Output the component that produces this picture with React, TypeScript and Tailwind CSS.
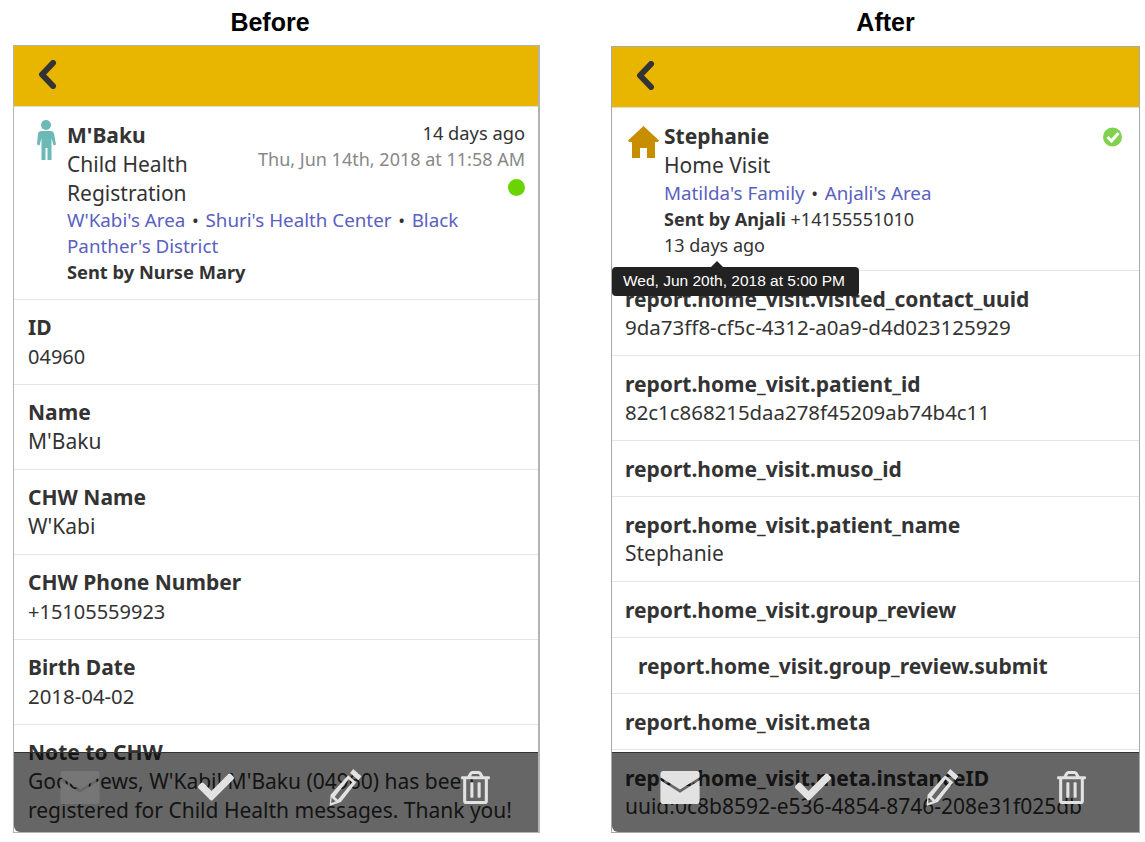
import { FaCheck, FaRegTrashAlt } from "react-icons/fa";

type Row = { label: string; value?: string; size?: string; indent?: boolean };

const beforeRows: Row[] = [
  { label: "ID", value: "04960", size: "text-[20px]" },
  { label: "Name", value: "M'Baku" },
  { label: "CHW Name", value: "W'Kabi" },
  { label: "CHW Phone Number", value: "+15105559923", size: "text-[20px]" },
  { label: "Birth Date", value: "2018-04-02", size: "text-[20.400px]" },
  {
    label: "Note to CHW",
    value: "Good news, W'Kabi! M'Baku (04960) has been registered for Child Health messages. Thank you!",
  },
];

const afterRows: Row[] = [
  { label: "report.home_visit.visited_contact_uuid", value: "9da73ff8-cf5c-4312-a0a9-d4d023125929", size: "text-[20.500px]" },
  { label: "report.home_visit.patient_id", value: "82c1c868215daa278f45209ab74b4c11", size: "text-[20.400px]" },
  { label: "report.home_visit.muso_id" },
  { label: "report.home_visit.patient_name", value: "Stephanie" },
  { label: "report.home_visit.group_review" },
  { label: "report.home_visit.group_review.submit", indent: true },
  { label: "report.home_visit.meta" },
  { label: "report.home_visit.meta.instanceID", value: "uuid:0c8b8592-e536-4854-8746-208e31f025db" },
];

function Rows({ rows, tight }: { rows: Row[]; tight?: boolean }) {
  return (
    <div>
      {rows.map((row) => (
        <div
          key={row.label}
          className={`border-b border-[#e5e5e5] pr-[14px] pb-[13px] ${tight ? "pl-[13px] pt-[14px]" : "pl-[14px] pt-[13px]"}`}
        >
          <div className={`font-bold ${tight ? "leading-[28px]" : "leading-[29px]"} ${row.indent ? "pl-[13px]" : ""}`}>
            {row.label}
          </div>
          {row.value && <div className={`leading-[29px] ${row.size ?? ""}`}>{row.value}</div>}
        </div>
      ))}
    </div>
  );
}

function Envelope({ className }: { className: string }) {
  return (
    <svg viewBox="0 0 38 32" className={className}>
      <path
        fill="currentColor"
        d="M3 0h32a3 3 0 0 1 3 3v3L19 18 0 6V3a3 3 0 0 1 3-3zM0 9l19 12L38 9v20a3 3 0 0 1-3 3H3a3 3 0 0 1-3-3z"
      />
    </svg>
  );
}

function Pencil({ className }: { className: string }) {
  return (
    <svg viewBox="0 0 32 36" className={`w-[34px] h-[37px] text-[#e2e2e2] ${className}`}>
      <path
        fill="currentColor"
        fillRule="evenodd"
        d="M24 0l8 7-3 4-8-7zM19 6l8 7-15 19-11 4 1-11zM19.500 10L6 27l3 3 14-17zM3 28l-.5 5 4.500-1.500z"
      />
    </svg>
  );
}

function ActionBar({ left }: { left?: boolean }) {
  return (
    <div
      className={`absolute left-0 right-0 bottom-0 h-[80px] bg-[#000000]/60 border-t border-[#333] rounded-bl-[6px] grid grid-cols-4 items-center justify-items-center pb-[11px] ${left ? "pl-[5px]" : "pl-[2px]"}`}
    >
      <Envelope className={`w-[40px] h-[33px] ${left ? "text-[#767676] -mr-[4px] -ml-[4px] mr-[4px]" : "text-[#e2e2e2]"}`} />
      <FaCheck className="text-[#e2e2e2] text-[36px] ml-[4px]" />
      <Pencil className={left ? "ml-[4px]" : ""} />
      <FaRegTrashAlt className={`text-[#e2e2e2] text-[33px] ${left ? "ml-[4px]" : "-ml-[4px]"}`} />
    </div>
  );
}

function Header() {
  return (
    <div className="h-[61px] bg-[#e8b500] border-b border-[#dcdcdc] flex items-center pl-[23px] pb-[3px]">
      <svg viewBox="0 0 20 29" className="w-[20px] h-[29px] text-[#333]">
        <polyline
          points="16,3 5,14.500 16,26"
          fill="none"
          stroke="currentColor"
          strokeWidth="6"
          strokeLinecap="round"
          strokeLinejoin="round"
        />
      </svg>
    </div>
  );
}

function Person() {
  return (
    <svg viewBox="0 0 20 40" className="w-[20px] h-[40px] text-[#6db9b5]">
      <circle cx="10" cy="5" r="5" fill="currentColor" />
      <path
        fill="currentColor"
        d="M5 11h10a3 3 0 0 1 3 2.500l2 11-2.500 1-2-7.500V26v14h-4V28H9.500v12h-4V18l-2 7.500L1 24.500l1-11A3 3 0 0 1 5 11z"
      />
    </svg>
  );
}

function House() {
  return (
    <svg viewBox="0 0 31 32" className="w-[31px] h-[32px] text-[#c78f00]">
      <path
        fill="currentColor"
        d="M15.500 0L31 14.500l-1 1.500h-3v16h-8V22h-7v10H4V16H1l-1-1.500z"
      />
    </svg>
  );
}

function Verified() {
  return (
    <svg viewBox="0 0 20 20" className="float-right w-[20px] h-[20px] mt-[5px] mr-[3px]">
      <circle cx="9.500" cy="10" r="9.500" fill="#7fd14e" />
      <path d="M4.500 10l4 4 7-8" fill="none" stroke="white" strokeWidth="3" />
    </svg>
  );
}

function Dot() {
  return <span className="mx-[2px]">•</span>;
}

const linkClass = "text-[#5a5fc0] text-[18.800px]";

export default function App() {
  return (
    <div
      className="w-[1145px] h-[842px] bg-white text-[#333] text-[21px] overflow-hidden flex pl-[13px] pt-[8px] gap-[71px]"
      style={{ fontFamily: '"Noto Sans", sans-serif' }}
    >
      <div className="w-[527px]">
        <h2
          className="h-[37px] pr-[13px] text-center text-[25px] leading-[28px] font-bold text-black"
          style={{ fontFamily: '"Liberation Sans", sans-serif' }}
        >
          Before
        </h2>
        <div className="relative h-[788px] border border-[#b4b4b4] border-r-2 overflow-hidden">
          <Header />
          <div className="border-b border-[#e5e5e5] h-[193px] pl-[22px] pr-[13px] pt-[13px] flex">
            <div className="w-[31px] shrink-0">
              <Person />
            </div>
            <div className="flex-1">
              <div className="float-right w-[268px] text-right text-[18px] leading-[26px]">
                <div className="text-[18.300px]">14 days ago</div>
                <div className="text-[#888]">Thu, Jun 14th, 2018 at 11:58 AM</div>
                <div className="flex justify-end pt-[7px]">
                  <span className="w-[17px] h-[17px] rounded-full bg-[#6ad400]" />
                </div>
              </div>
              <div className="font-bold leading-[29px] pt-[1px]">M'Baku</div>
              <div className="leading-[29px]">Child Health Registration</div>
              <div className="text-[18px] leading-[26px] -mt-[1px]">
                <a className={linkClass}>W'Kabi's Area</a> <Dot /> <a className={linkClass}>Shuri's Health Center</a> <Dot />{" "}
                <a className={linkClass}>Black Panther's District</a>
              </div>
              <div className="text-[18.300px] leading-[26px] font-bold">Sent by Nurse Mary</div>
            </div>
          </div>
          <Rows rows={beforeRows} />
          <ActionBar left />
        </div>
      </div>
      <div className="w-[529px] pt-[1px]">
        <h2
          className="h-[37px] pl-[20px] text-center text-[25px] leading-[26px] font-bold text-black"
          style={{ fontFamily: '"Liberation Sans", sans-serif' }}
        >
          After
        </h2>
        <div className="relative h-[787px] border border-[#a8a8a8] overflow-hidden">
          <Header />
          <div className="border-b border-[#e5e5e5] h-[163px] pl-[16px] pr-[13px] pt-[14px] flex">
            <div className="w-[36px] shrink-0 pt-[4px]">
              <House />
            </div>
            <div className="flex-1">
              <Verified />
              <div className="font-bold leading-[29px]">Stephanie</div>
              <div className="leading-[29px]">Home Visit</div>
              <div className="text-[18px] leading-[26px]">
                <a className={linkClass}>Matilda's Family</a> <Dot /> <a className={linkClass}>Anjali's Area</a>
              </div>
              <div className="text-[18px] leading-[26px]">
                <span className="font-bold">Sent by Anjali</span> +14155551010
              </div>
              <div className="text-[18px] leading-[26px]">13 days ago</div>
            </div>
          </div>
          <Rows rows={afterRows} tight />
          <div
            className="absolute left-0 top-[220px] h-[29px] w-[247px] bg-[#222] rounded-[4px] text-white text-[15.500px] leading-[28px] pl-[11px]"
            style={{ fontFamily: '"Liberation Sans", sans-serif' }}
          >
            Wed, Jun 20th, 2018 at 5:00 PM
            <span className="absolute -top-[6px] left-[99px] w-0 h-0 border-x-[6px] border-x-transparent border-b-[6px] border-b-[#222]" />
          </div>
          <ActionBar />
        </div>
      </div>
    </div>
  );
}
